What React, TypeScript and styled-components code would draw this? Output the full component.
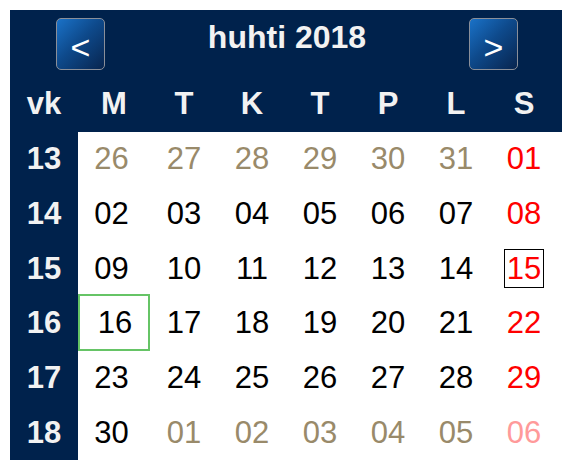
import { FC } from "react";
import styled, { createGlobalStyle, css } from "styled-components";

const GlobalStyle = createGlobalStyle`
  html, body {
    margin: 0;
    padding: 0;
    background: #ffffff;
  }
  body {
    font-family: "Liberation Sans", Arial, sans-serif;
  }
`;

const NAVY = "#00224c";

const Calendar = styled.div`
  margin: 10px;
  width: 552px;
  height: 450px;
  display: flex;
  flex-direction: column;
  background: ${NAVY};
`;

const TitleRow = styled.div`
  height: 66px;
  box-sizing: border-box;
  padding: 8px 44px 0 46px;
  display: flex;
  align-items: flex-start;
  justify-content: space-between;
`;

const NavButton = styled.button`
  width: 49px;
  height: 52px;
  box-sizing: border-box;
  border: 1px solid #8a8f99;
  border-radius: 5px;
  background: linear-gradient(135deg, #1a72c8 0%, #0e4a8c 45%, #08254f 100%);
  color: #ffffff;
  font-family: "Liberation Sans", Arial, sans-serif;
  font-size: 34px;
  line-height: 1;
  padding: 6px 0 0;
  display: flex;
  align-items: center;
  justify-content: center;
`;

const Title = styled.div`
  color: #f2f2f2;
  font-weight: bold;
  font-size: 32px;
  line-height: 36px;
  margin-top: 1px;
`;

const Grid = styled.div`
  display: grid;
  grid-template-columns: 68px 72px repeat(6, 68px);
`;

const HeadCell = styled.div`
  height: 56px;
  display: flex;
  align-items: center;
  justify-content: center;
  color: #f2f2f2;
  font-weight: bold;
  font-size: 31px;
`;

const Body = styled(Grid)`
  flex: 1;
  grid-auto-rows: 1fr;
  background: #ffffff;
`;

const WeekCell = styled.div`
  display: flex;
  align-items: center;
  justify-content: center;
  color: #f2f2f2;
  font-weight: bold;
  font-size: 31px;
  background: ${NAVY};
`;

type Kind = "normal" | "other" | "sunday" | "otherSunday";

const colors: Record<Kind, string> = {
  normal: "#000000",
  other: "#998a6a",
  sunday: "#ff0000",
  otherSunday: "#ff9a9a",
};

const DayCell = styled.div<{ $kind: Kind; $first?: boolean; $today?: boolean }>`
  display: flex;
  align-items: center;
  justify-content: center;
  font-size: 31px;
  color: ${(p) => colors[p.$kind]};
  ${(p) =>
    p.$first &&
    css`
      padding-right: 5px;
    `}
  ${(p) =>
    p.$today &&
    css`
      box-shadow: inset 0 0 0 2px #66c466;
      margin-top: -2px;
      padding-top: 2px;
      padding-left: 2px;
      padding-right: 0;
    `}
`;

const Selected = styled.span`
  border: 1px solid #000000;
  padding: 1px 2px;
  line-height: 35px;
`;

interface Day {
  n: string;
  kind: Kind;
  today?: boolean;
  selected?: boolean;
}

const mk = (nums: string[], kinds: Kind[]): Day[] =>
  nums.map((n, i) => ({ n, kind: kinds[i] }));

const N: Kind = "normal";
const O: Kind = "other";
const S: Kind = "sunday";

const weeks: { wk: number; days: Day[] }[] = [
  { wk: 13, days: mk(["26", "27", "28", "29", "30", "31", "01"], [O, O, O, O, O, O, S]) },
  { wk: 14, days: mk(["02", "03", "04", "05", "06", "07", "08"], [N, N, N, N, N, N, S]) },
  { wk: 15, days: mk(["09", "10", "11", "12", "13", "14", "15"], [N, N, N, N, N, N, S]) },
  { wk: 16, days: mk(["16", "17", "18", "19", "20", "21", "22"], [N, N, N, N, N, N, S]) },
  { wk: 17, days: mk(["23", "24", "25", "26", "27", "28", "29"], [N, N, N, N, N, N, S]) },
  { wk: 18, days: mk(["30", "01", "02", "03", "04", "05", "06"], [N, O, O, O, O, O, "otherSunday"]) },
];
weeks[2].days[6].selected = true;
weeks[3].days[0].today = true;

const dayNames = ["vk", "M", "T", "K", "T", "P", "L", "S"];

const App: FC = () => (
  <>
    <GlobalStyle />
    <Calendar>
      <TitleRow>
        <NavButton>&lt;</NavButton>
        <Title>huhti 2018</Title>
        <NavButton>&gt;</NavButton>
      </TitleRow>
      <Grid>
        {dayNames.map((d, i) => (
          <HeadCell key={i}>{d}</HeadCell>
        ))}
      </Grid>
      <Body>
        {weeks.map((w) => [
          <WeekCell key={`w${w.wk}`}>{w.wk}</WeekCell>,
          ...w.days.map((d, i) => (
            <DayCell
              key={`${w.wk}-${i}`}
              $kind={d.kind}
              $first={i === 0}
              $today={d.today}
            >
              {d.selected ? <Selected>{d.n}</Selected> : d.n}
            </DayCell>
          )),
        ])}
      </Body>
    </Calendar>
  </>
);

export default App;
